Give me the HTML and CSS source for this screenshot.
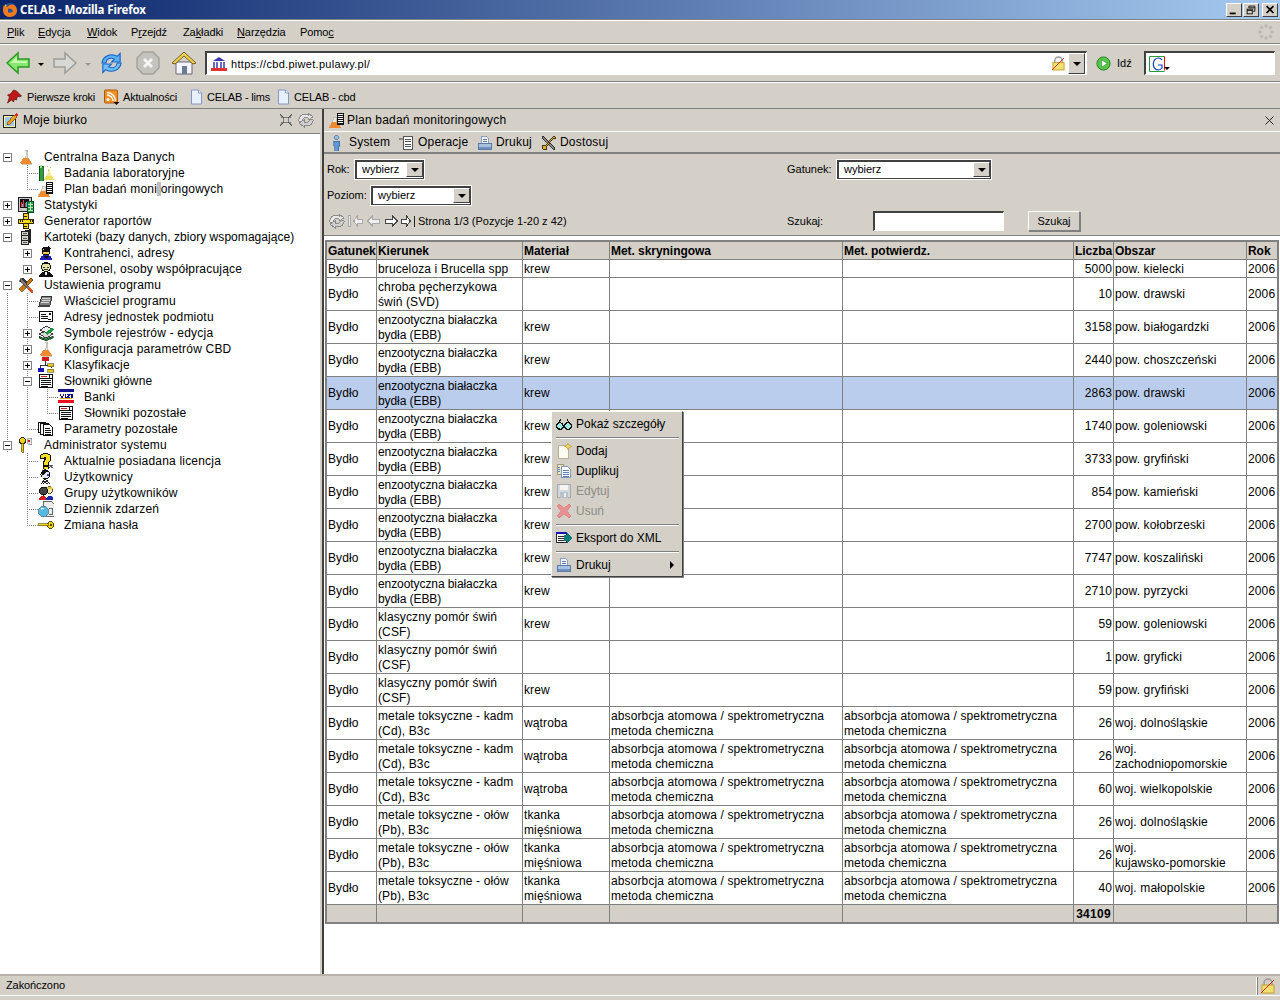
FILE: index.html
```html
<!DOCTYPE html>
<html lang="pl">
<head>
<meta charset="utf-8">
<title>CELAB - Mozilla Firefox</title>
<link rel="stylesheet" href="styles.css">
</head>
<body>
<svg class="defs" xmlns="http://www.w3.org/2000/svg">
  <symbol id="flask" viewBox="0 0 16 16"><path d="M6.5 1h3v1h-.5v5l4.500 7v1h-10v-1l4.500-7v-5h-.5z" fill="#e8e4dc" stroke="#b0a898" stroke-width=".6"/><path d="M5.500 9h5l3 4.500v1.500h-11v-1.500z" fill="#ee8a30"/></symbol>
  <symbol id="flasktube" viewBox="0 0 16 16"><rect x="1" y="1" width="4" height="15" fill="#2e9e3a" stroke="#0a3a12" stroke-width=".8"/><rect x="2" y="0" width="2" height="3" fill="#90ee90"/><path d="M10 4v3l-4 8h10l-4-8v-3z" fill="#f4ec9a"/><path d="M8 11h6l2 4h-10z" fill="#eedd55"/><g fill="#c8b850"><rect x="9" y="1" width="1" height="1"/><rect x="12" y="2" width="1" height="1"/><rect x="10" y="5" width="1" height="1"/></g></symbol>
  <symbol id="flasklist" viewBox="0 0 16 16"><path d="M4 5h3v3l4 7H0l4-7z" fill="#ece8e0" stroke="#b0a898" stroke-width=".5"/><path d="M3 10h5l4 5.500H0z" fill="#ee8a30"/><rect x="8.500" y="1.500" width="6" height="11" fill="#fff" stroke="#111"/><path d="M9 3.500h5M9 5.500h5M9 7.500h5M9 9.500h5M9 11.500h5" stroke="#111"/></symbol>
  <symbol id="stats" viewBox="0 0 16 16"><rect x="0.500" y="0.500" width="13" height="14" fill="#c8c8c8" stroke="#222"/><rect x="2" y="2" width="9" height="9" fill="#101018"/><path d="M3.500 10V5M5.500 10V3M7.500 10V6M9.500 10V4" stroke="#e04040"/><path d="M4.500 10V7M8.500 10V5" stroke="#40c0f0"/><rect x="9.500" y="4.500" width="6" height="11" fill="#1c9a4a" stroke="#0a4a20"/><path d="M10 7.500h5M10 10.500h5M10 13.500h5M12.500 5v9" stroke="#bfe8b0"/></symbol>
  <symbol id="ruler" viewBox="0 0 16 16"><rect x="5.500" y="0.500" width="5" height="15" fill="#f4d820" stroke="#332b00"/><rect x="0.500" y="6.500" width="15" height="4" fill="#f4d820" stroke="#332b00"/><path d="M2.500 7v2M4.500 7v2M12.500 7v2M14.500 7v2M6 3.500h3M6 13.500h3" stroke="#222"/></symbol>
  <symbol id="cabinet" viewBox="0 0 16 16"><path d="M5 2l8-2v14l-8 2z" fill="#222"/><rect x="3.500" y="2.500" width="7" height="13" fill="#d0d0c8" stroke="#222"/><path d="M3 6.500h8M3 11.500h8" stroke="#222"/><path d="M5 4.500h4M5 9.500h4M5 13.500h4" stroke="#555"/></symbol>
  <symbol id="agent" viewBox="0 0 16 16"><circle cx="8" cy="6" r="4" fill="#f0d040" stroke="#111"/><path d="M3 4l8-3 2 3-5 1z" fill="#111"/><rect x="4" y="5" width="8" height="2" fill="#111"/><path d="M2 15c0-4 3-5 6-5s6 1 6 5z" fill="#2020c0"/><path d="M5 11h6l-3 3z" fill="#111"/></symbol>
  <symbol id="person" viewBox="0 0 16 16"><circle cx="8" cy="6" r="4.500" fill="#e8e4a8" stroke="#111"/><path d="M3.500 5c1-5 8-5 9 0l-2-2h-5z" fill="#111"/><path d="M5 6.500h2M9 6.500h2M6 8.500h4" stroke="#333"/><path d="M1 16c0-4 3-5 7-5s7 1 7 5z" fill="#111"/><path d="M7 11h2v3h-2z" fill="#eee"/></symbol>
  <symbol id="tools" viewBox="0 0 16 16"><path d="M13 1l2 2-11 12-3-3z" fill="#c87818" stroke="#5a3000" stroke-width=".7"/><path d="M1 4l4-3 4 4-2 2z" fill="#404040" stroke="#111" stroke-width=".5"/><path d="M3 1l11 12 1 2-2 0-11-11z" fill="#7a7a7a" stroke="#222" stroke-width=".6"/><path d="M11 10l4 4-2 2-4-4z" fill="#d85020"/></symbol>
  <symbol id="owner" viewBox="0 0 16 16"><path d="M4 3h10l-2 9H1z" fill="#808080" stroke="#222" stroke-width=".8"/><path d="M4 5.500h8M3.500 7.500h8M3 9.500h8" stroke="#d8d8d8"/><path d="M1 12h11v2H0z" fill="#444"/></symbol>
  <symbol id="addr" viewBox="0 0 16 16"><rect x="1.500" y="2.500" width="13" height="10" fill="#fff" stroke="#111"/><path d="M3 5.500h5M3 7.500h7M3 9.500h7M10 10.500h3" stroke="#111"/><rect x="11" y="4" width="2" height="2" fill="#111"/></symbol>
  <symbol id="symb" viewBox="0 0 16 16"><path d="M1 9l7-3 7 3-7 4z" fill="#d8d8d8" stroke="#111" stroke-width=".8"/><path d="M2 5l6-4 7 4-6 3z" fill="#f0f0f0" stroke="#111" stroke-width=".8"/><path d="M8 7l6-4 2 2-7 5z" fill="#1a9a3a"/><path d="M1 11l7 3 7-3v2l-7 3-7-3z" fill="#1c7a30" stroke="#111" stroke-width=".5"/></symbol>
  <symbol id="hier" viewBox="0 0 16 16"><rect x="4" y="0" width="7" height="4" fill="#d01818"/><path d="M7.500 4v4M2.500 8.500h11M2.500 8v3M13.500 8v3" stroke="#333"/><rect x="0" y="11" width="6" height="4" fill="#1818b0"/><rect x="9.500" y="6.500" width="6" height="3" fill="#e8c818" stroke="#333" stroke-width=".5"/><rect x="9.500" y="12" width="6" height="3" fill="#e8c818" stroke="#333" stroke-width=".5"/></symbol>
  <symbol id="form" viewBox="0 0 16 16"><rect x="1.500" y="1.500" width="13" height="13" fill="#fff" stroke="#111"/><path d="M1 5.500h14M11.500 1v4" stroke="#111"/><path d="M3 3.500h6" stroke="#d02020"/><path d="M3 7.500h10M3 9.500h10M3 11.500h10M3 13.500h7" stroke="#111"/></symbol>
  <symbol id="visa" viewBox="0 0 16 16"><rect x="0" y="0" width="16" height="14" fill="#f4f4e8"/><rect x="0" y="0" width="16" height="3" fill="#10108a"/><rect x="0" y="11" width="16" height="3" fill="#e81020"/><path d="M2 5l2 4 2-4M7.500 5v4M9 5.500h3l-3 3h3M13 9l1-4 1 4" stroke="#10108a" fill="none"/><path d="M2 9.500h12" stroke="#e8a818"/></symbol>
  <symbol id="pages" viewBox="0 0 16 16"><rect x="0.500" y="1.500" width="7" height="10" fill="#fff" stroke="#111"/><rect x="2.500" y="2.500" width="8" height="11" fill="#fff" stroke="#111"/><path d="M5.500 3.500h6l3 3v8h-9z" fill="#fff" stroke="#111"/><path d="M7 7.500h5M7 9.500h6M7 11.500h6M7 13.500h6" stroke="#111"/></symbol>
  <symbol id="admin" viewBox="0 0 16 16"><circle cx="4.500" cy="3.500" r="3" fill="#f0d020" stroke="#332b00"/><path d="M3.500 6h2v9h-2l-1-1 1-1-1-1 1-1z" fill="#f0d020" stroke="#332b00" stroke-width=".6"/><path d="M9 2l5 -1-1 4 1 3-4-1z" fill="#e0e0e0" stroke="#666" stroke-width=".5"/><circle cx="11" cy="4" r="1.500" fill="#c02020"/></symbol>
  <symbol id="quest" viewBox="0 0 16 16"><path d="M2 5c0-6 11-6 11 0 0 4-3 3-3 7H5c0-5 3-4 3-7 0-1-2-1-2 1z" fill="#f4e020" stroke="#111"/><rect x="5" y="13" width="5" height="3" fill="#f4e020" stroke="#111"/><path d="M11 12l4 3M11 15l4-3" stroke="#555"/></symbol>
  <symbol id="user" viewBox="0 0 16 16"><circle cx="7.500" cy="5.500" r="4.500" fill="#e8e8f0" stroke="#111"/><path d="M3 5c0-5 6-6 8-3l-4 2-2 3z" fill="#111"/><rect x="9" y="5" width="2" height="2" fill="#2040d0"/><path d="M3 15l4-5 5 5M5 12l5 3M10 11l-5 4" stroke="#222" fill="none"/></symbol>
  <symbol id="group" viewBox="0 0 16 16"><circle cx="11" cy="5" r="3.500" fill="#f4e8a0" stroke="#111" stroke-width=".7"/><path d="M8 4c1-3 6-3 7 0z" fill="#e8c820"/><circle cx="5.500" cy="6" r="4" fill="#444" stroke="#111"/><path d="M1 15c0-3 2-4 4-4s4 1 4 4z" fill="#d02020"/><path d="M8 15c0-3 2-4 4-4s3 1 3 4z" fill="#1828b0"/></symbol>
  <symbol id="log" viewBox="0 0 16 16"><path d="M5 0h8l3 3v12h-8z" fill="#ececec" stroke="#444" stroke-width=".8"/><path d="M11 7.500h3v6h-3" stroke="#666" fill="none"/><circle cx="5.500" cy="10.500" r="5" fill="#58b8e0" stroke="#206080" stroke-width=".7"/><path d="M3 9a3 3 0 0 1 3-2" stroke="#d8f4ff" fill="none"/></symbol>
  <symbol id="key" viewBox="0 0 16 16"><circle cx="12.500" cy="8" r="3.200" fill="#f0d820" stroke="#554800"/><rect x="0.500" y="6.500" width="10" height="2" fill="#f0d820" stroke="#554800" stroke-width=".6"/><rect x="12" y="7" width="2" height="2" fill="#554800"/></symbol>
  <symbol id="desk" viewBox="0 0 16 16"><rect x="0.500" y="3.500" width="12" height="12" fill="#fdf4b0" stroke="#222"/><rect x="2" y="5" width="9" height="9" fill="#9ec8e8"/><path d="M4 11l7-8 3 2-7 7-3 1z" fill="#e8a020" stroke="#5a3000" stroke-width=".5"/><path d="M11 3l2-2 2 2-2 2z" fill="#d03020"/></symbol>
  <symbol id="collapse" viewBox="0 0 14 14"><g fill="#7c7c7c"><path d="M1 1l4 4h-3zM13 1l-4 4h3zM1 13l4-4h-3zM13 13l-4-4h3z"/></g><rect x="4.500" y="4.500" width="5" height="5" fill="none" stroke="#7c7c7c"/><path d="M1 1l4 4M13 1l-4 4M1 13l4-4M13 13l-4-4" stroke="#555"/></symbol>
  <symbol id="sync" viewBox="0 0 16 16"><path d="M1 9a6 6 0 0 1 9-6V1l5 4-5 3V6a4 4 0 0 0-6 3z" fill="#e8e8e8" stroke="#8a8a8a"/><path d="M15 7a6 6 0 0 1-9 6v2l-5-4 5-3v2a4 4 0 0 0 6-3z" fill="#d0d0d0" stroke="#8a8a8a"/></symbol>
  <symbol id="mperson" viewBox="0 0 12 16"><circle cx="6" cy="2.500" r="2" fill="#8ec0e8" stroke="#2a5a90" stroke-width=".6"/><path d="M3 6h6v5H8v5H4v-5H3z" fill="#5a98d8" stroke="#2a5a90" stroke-width=".6"/></symbol>
  <symbol id="mlist" viewBox="0 0 16 16"><rect x="4.500" y="1.500" width="9" height="13" fill="#fff" stroke="#555"/><path d="M6 4.500h6M6 6.500h6M6 9.500h6M6 11.500h6" stroke="#555"/><rect x="0" y="3" width="4" height="2" fill="#888"/></symbol>
  <symbol id="printer" viewBox="0 0 16 16"><path d="M4.500 1.500h5l2 2v5h-7z" fill="#f4f4f4" stroke="#8aa0c0"/><path d="M5.500 4.500h4M5.500 6.500h4" stroke="#5a78a8"/><path d="M1.500 8.500h13v5a1 1 0 0 1-1 1h-11a1 1 0 0 1-1-1z" fill="#a8c0e0" stroke="#5a78a8"/><rect x="2" y="12" width="12" height="2" fill="#7090c0"/></symbol>
  <symbol id="wrench" viewBox="0 0 16 16"><path d="M2 1l3 3 9 9-1 2-10-10-2-3z" fill="#888" stroke="#111" stroke-width=".8"/><path d="M13 1l2 2-3 1-7 8 1 2-3 1-2-2 1-3 2 1 7-8z" fill="#e8b020" stroke="#111" stroke-width=".8"/></symbol>
  <symbol id="first" viewBox="0 0 15 12"><path d="M.5.500h2v11h-2z" fill="#ececec" stroke="#a8a8a8"/><path d="M5.500 6l4-5v3h5v4h-5v3z" fill="#f0f0f0" stroke="#a8a8a8"/></symbol>
  <symbol id="prev" viewBox="0 0 15 12"><path d="M1.500 6l5-5v3h7v4h-7v3z" fill="#f0f0f0" stroke="#a8a8a8"/></symbol>
  <symbol id="next" viewBox="0 0 15 12"><path d="M13.500 6l-5-5v3h-7v4h7v3z" fill="#fff" stroke="#444"/></symbol>
  <symbol id="last" viewBox="0 0 15 12"><path d="M9.500 6l-4-5v3h-5v4h5v3z" fill="#fff" stroke="#444"/><path d="M13.500.500v11" stroke="#222" stroke-width="1.500"/></symbol>
  <symbol id="glasses" viewBox="0 0 16 16"><circle cx="4" cy="10" r="3.200" fill="#9ee8e8" stroke="#111" stroke-width="1.200"/><circle cx="12" cy="10" r="3.200" fill="#9ee8e8" stroke="#111" stroke-width="1.200"/><path d="M7 9.500h2M2 8l3-5M14 8l-3-5" stroke="#111" fill="none"/></symbol>
  <symbol id="newdoc" viewBox="0 0 16 16"><path d="M2.500 2.500h7l3 3v10h-10z" fill="#fbfbf4" stroke="#b8b090"/><path d="M12 0l1.200 2.300L15.500 3.500 13.200 4.700 12 7l-1.200-2.300L8.500 3.500l2.300-1.200z" fill="#f0d060" stroke="#b09020" stroke-width=".5"/></symbol>
  <symbol id="dup" viewBox="0 0 16 16"><path d="M1.500 1.500h6v10h-6z" fill="#f0e8c8" stroke="#a09870"/><path d="M5.500 3.500h6l3 3v8h-9z" fill="#fff" stroke="#8098b8"/><path d="M7 7.500h6M7 9.500h6M7 11.500h6M7 13.500h6" stroke="#5a80c0"/><path d="M2 4.500h2M2 6.500h2M2 8.500h2" stroke="#5a80c0"/></symbol>
  <symbol id="floppy" viewBox="0 0 16 16"><path d="M1.500 1.500h13v13h-13z" fill="#d0d8e0" stroke="#a8a8a8"/><rect x="4" y="2" width="8" height="5" fill="#f4f4f4"/><rect x="4" y="9" width="8" height="6" fill="#b8c0c8"/><rect x="8" y="10" width="2" height="4" fill="#f0f0f0"/></symbol>
  <symbol id="xred" viewBox="0 0 16 16"><path d="M3 1l5 4 5-4 2 2-4 5 4 5-2 2-5-4-5 4-2-2 4-5-4-5z" fill="#e89090" stroke="#d07878" stroke-width=".6"/></symbol>
  <symbol id="export" viewBox="0 0 18 16"><rect x="0.500" y="1.500" width="11" height="12" fill="#fff" stroke="#111"/><rect x="0" y="1" width="12" height="3" fill="#1818b0"/><path d="M2 6.500h7M2 8.500h7M2 10.500h7M2 12.500h7" stroke="#111"/><path d="M9 5h3V1l6 7-6 7v-4H9z" fill="#107a78"/></symbol>
</svg>

<div class="titlebar">
  <svg class="ff" viewBox="0 0 16 16" aria-hidden="true"><circle cx="8" cy="8" r="7" fill="#2b4f98"/><path d="M2 3c0 0 1 2 3 2 2-2 5-3 7-2 3 2 4 6 2 9-2 3-7 4-10 2C1 12 0 7 2 3z" fill="#ee7a1c"/><path d="M6 7c2-1 4 0 5 2-1 2-4 2-5 1z" fill="#2b4f98"/><path d="M3 2l2 2-2 1z" fill="#f8c030"/></svg>
  <span class="wintitle">CELAB - Mozilla Firefox</span>
  <span class="winbtns">
    <span class="winbtn"><svg viewBox="0 0 16 14"><rect x="3" y="10" width="7" height="2" fill="#000"/></svg></span>
    <span class="winbtn"><svg viewBox="0 0 16 14"><path d="M5.500 2.500h7v6h-2M5.500 4.500h7" fill="none" stroke="#000"/><path d="M5.500 2.500v2" stroke="#000"/><rect x="3.500" y="6" width="6" height="5.500" fill="#d4d0c8" stroke="#000"/><path d="M3.500 7.500h6" stroke="#000"/></svg></span>
    <span class="winbtn winclose"><svg viewBox="0 0 16 14"><path d="M4 2.500l8 8M12 2.500l-8 8" stroke="#000" stroke-width="2"/></svg></span>
  </span>
</div>

<div class="menubar">
  <span class="mi mi-plik"><u>P</u>lik</span>
  <span class="mi mi-edycja"><u>E</u>dycja</span>
  <span class="mi mi-widok"><u>W</u>idok</span>
  <span class="mi mi-przejdz">P<u>r</u>zejdź</span>
  <span class="mi mi-zakladki">Za<u>k</u>ładki</span>
  <span class="mi mi-narzedzia"><u>N</u>arzędzia</span>
  <span class="mi mi-pomoc">Pomo<u>c</u></span>
  <svg class="throbber" viewBox="0 0 16 16" aria-hidden="true"><g fill="#bdbab2"><circle cx="8" cy="2" r="1.800"/><circle cx="12.500" cy="3.500" r="1.800"/><circle cx="14" cy="8" r="1.800"/><circle cx="12.500" cy="12.500" r="1.800"/><circle cx="8" cy="14" r="1.800"/><circle cx="3.500" cy="12.500" r="1.800"/><circle cx="2" cy="8" r="1.800"/><circle cx="3.500" cy="3.500" r="1.800"/></g></svg>
</div>

<div class="navbar">
  <svg class="nb nb-back" viewBox="0 0 24 24" aria-hidden="true"><path d="M1 12L12 2v6h11v8H12v6z" fill="#86e870" stroke="#2a9a20" stroke-width="1.500"/><path d="M4 12l7-6v4h10v2z" fill="#c8f8b0"/></svg>
  <span class="drop drop-a"></span>
  <svg class="nb nb-fwd" viewBox="0 0 24 24" aria-hidden="true"><path d="M23 12L12 2v6H1v8h11v6z" fill="#d8d8d4" stroke="#9c9c98" stroke-width="1.500"/></svg>
  <span class="drop drop-b"></span>
  <svg class="nb nb-reload" viewBox="0 0 24 24" aria-hidden="true"><path d="M2 12C3 5 11 1 18 5l3-3v9h-9l3-3c-4-2-8-1-9 4z" fill="#58b0f0" stroke="#1a62c8" stroke-width="1.200"/><path d="M22 12c-1 7-9 11-16 7l-3 3v-9h9l-3 3c4 2 8 1 9-4z" fill="#70c0f8" stroke="#1a62c8" stroke-width="1.200"/></svg>
  <svg class="nb nb-stop" viewBox="0 0 24 24" aria-hidden="true"><path d="M7 1h10l6 6v10l-6 6H7l-6-6V7z" fill="#c4c2bc" stroke="#a4a29c" stroke-width="1.500"/><path d="M8 8l8 8M16 8l-8 8" stroke="#f4f4f4" stroke-width="3"/></svg>
  <svg class="nb nb-home" viewBox="0 0 24 24" aria-hidden="true"><path d="M4 11h16v12H4z" fill="#f4f4f8" stroke="#667" stroke-width="1"/><path d="M0 12L12 1l12 11-3 1L12 5l-9 8z" fill="#f0d050" stroke="#776020" stroke-width="1"/><rect x="10" y="15" width="5" height="8" fill="#6a7a98"/></svg>
  <div class="urlbar">
    <svg class="url-ico" viewBox="0 0 16 16" aria-hidden="true"><path d="M2 5l6-4 6 4z" fill="#3838a8"/><path d="M3 6v6M6 6v6M10 6v6M13 6v6" stroke="#3838a8" stroke-width="1.500"/><rect x="0" y="12" width="16" height="3" fill="#e03030"/></svg>
    <span class="url-text">https://cbd.piwet.pulawy.pl/</span>
    <svg class="lock" viewBox="0 0 14 16" aria-hidden="true"><path d="M3 8V5a4 4 0 0 1 8 0v3" fill="none" stroke="#999" stroke-width="1.500"/><rect x="1" y="7" width="12" height="8" fill="#f4e070" stroke="#c0a030"/><path d="M0 15L13 2" stroke="#e02020"/></svg>
    <span class="combo-arrow"><i></i></span>
  </div>
  <svg class="go" viewBox="0 0 16 16" aria-hidden="true"><circle cx="8" cy="8" r="7" fill="#58c848" stroke="#1a7a20"/><path d="M6 4l6 4-6 4z" fill="#fff" stroke="#1a7a20" stroke-width=".6"/></svg>
  <span class="go-text">Idź</span>
  <div class="searchbox">
    <svg class="g-ico" viewBox="0 0 16 16" aria-hidden="true"><path d="M.5.500h15" stroke="#2a9a3a"/><path d="M.500 .500v15h15" stroke="#2a9a3a" fill="none"/><path d="M15.500 .500v14" stroke="#e01010"/><path d="M13 4a5 6 0 1 0 0 8V9h-4" fill="none" stroke="#1040c0" stroke-width="1.200"/></svg>
    <i class="g-arrow"></i>
  </div>
</div>

<div class="bookmarks">
  <span class="bm bm-1"><svg viewBox="0 0 16 16" aria-hidden="true"><path d="M1 14l2-6-2-2 3-1 3-4 3 1 2 2 3 3-2 1-2-1-1 4-2-1-1 3-2-2z" fill="#c01818" stroke="#400" stroke-width=".6"/></svg>Pierwsze kroki</span>
  <span class="bm bm-2"><svg viewBox="0 0 16 16" aria-hidden="true"><rect x="1" y="1" width="13" height="13" rx="1" fill="#f09028" stroke="#b05a08"/><circle cx="4.500" cy="10.500" r="1.500" fill="#fff"/><path d="M3.500 6a6 6 0 0 1 6 6M3.500 3.500a8.500 8.500 0 0 1 8.500 8.500" fill="none" stroke="#fff" stroke-width="1.400"/><path d="M10 13h6l-3 3z" fill="#111"/></svg>Aktualności</span>
  <span class="bm bm-3"><svg viewBox="0 0 16 16" aria-hidden="true"><path d="M3 1h7l3 3v11H3z" fill="#e8f0fc" stroke="#8098c8"/><path d="M10 1v3h3" fill="#fff" stroke="#8098c8"/></svg>CELAB - lims</span>
  <span class="bm bm-4"><svg viewBox="0 0 16 16" aria-hidden="true"><path d="M3 1h7l3 3v11H3z" fill="#e8f0fc" stroke="#8098c8"/><path d="M10 1v3h3" fill="#fff" stroke="#8098c8"/></svg>CELAB - cbd</span>
</div>

<div class="main">
  <aside class="leftpanel">
    <div class="lp-head">
      <svg class="ic" aria-hidden="true"><use href="#desk"/></svg>
      <span class="lp-title">Moje biurko</span>
      <svg class="ic14" aria-hidden="true"><use href="#collapse"/></svg>
      <svg class="ic ic-sync" aria-hidden="true"><use href="#sync"/></svg>
    </div>
    <div class="tree">
      <div class="row"><span class="ind"><b class="box minus"></b></span><svg class="ic"><use href="#flask"/></svg><span>Centralna Baza Danych</span></div>
      <div class="row"><span class="ind e"></span><span class="ind t"></span><svg class="ic"><use href="#flasktube"/></svg><span>Badania laboratoryjne</span></div>
      <div class="row"><span class="ind e"></span><span class="ind l"></span><svg class="ic"><use href="#flasklist"/></svg><span>Plan badań moni<span class="cur">t</span>oringowych</span></div>
      <div class="row"><span class="ind"><b class="box plus"></b></span><svg class="ic"><use href="#stats"/></svg><span>Statystyki</span></div>
      <div class="row"><span class="ind"><b class="box plus"></b></span><svg class="ic"><use href="#ruler"/></svg><span>Generator raportów</span></div>
      <div class="row tight"><span class="ind"><b class="box minus"></b></span><svg class="ic"><use href="#cabinet"/></svg><span>Kartoteki (bazy danych, zbiory wspomagające)</span></div>
      <div class="row"><span class="ind e"></span><span class="ind"><b class="box plus"></b></span><svg class="ic"><use href="#agent"/></svg><span>Kontrahenci, adresy</span></div>
      <div class="row"><span class="ind e"></span><span class="ind"><b class="box plus"></b></span><svg class="ic"><use href="#person"/></svg><span>Personel, osoby współpracujące</span></div>
      <div class="row"><span class="ind"><b class="box minus"></b></span><svg class="ic"><use href="#tools"/></svg><span>Ustawienia programu</span></div>
      <div class="row"><span class="ind v"></span><span class="ind t"></span><svg class="ic"><use href="#owner"/></svg><span>Właściciel programu</span></div>
      <div class="row"><span class="ind v"></span><span class="ind t"></span><svg class="ic"><use href="#addr"/></svg><span>Adresy jednostek podmiotu</span></div>
      <div class="row"><span class="ind v"></span><span class="ind v"><b class="box plus"></b></span><svg class="ic"><use href="#symb"/></svg><span>Symbole rejestrów - edycja</span></div>
      <div class="row"><span class="ind v"></span><span class="ind v"><b class="box plus"></b></span><svg class="ic"><use href="#flask"/></svg><span>Konfiguracja parametrów CBD</span></div>
      <div class="row"><span class="ind v"></span><span class="ind v"><b class="box plus"></b></span><svg class="ic"><use href="#hier"/></svg><span>Klasyfikacje</span></div>
      <div class="row"><span class="ind v"></span><span class="ind v"><b class="box minus"></b></span><svg class="ic"><use href="#form"/></svg><span>Słowniki główne</span></div>
      <div class="row"><span class="ind v"></span><span class="ind v"></span><span class="ind t"></span><svg class="ic"><use href="#visa"/></svg><span>Banki</span></div>
      <div class="row"><span class="ind v"></span><span class="ind v"></span><span class="ind l"></span><svg class="ic"><use href="#form"/></svg><span>Słowniki pozostałe</span></div>
      <div class="row"><span class="ind v"></span><span class="ind l"></span><svg class="ic"><use href="#pages"/></svg><span>Parametry pozostałe</span></div>
      <div class="row"><span class="ind v"><b class="box minus"></b></span><svg class="ic"><use href="#admin"/></svg><span>Administrator systemu</span></div>
      <div class="row"><span class="ind e"></span><span class="ind t"></span><svg class="ic"><use href="#quest"/></svg><span>Aktualnie posiadana licencja</span></div>
      <div class="row"><span class="ind e"></span><span class="ind t"></span><svg class="ic"><use href="#user"/></svg><span>Użytkownicy</span></div>
      <div class="row"><span class="ind e"></span><span class="ind t"></span><svg class="ic"><use href="#group"/></svg><span>Grupy użytkowników</span></div>
      <div class="row"><span class="ind e"></span><span class="ind t"></span><svg class="ic"><use href="#log"/></svg><span>Dziennik zdarzeń</span></div>
      <div class="row"><span class="ind e"></span><span class="ind l"></span><svg class="ic"><use href="#key"/></svg><span>Zmiana hasła</span></div>
    </div>
  </aside>
  <div class="divider"></div>
  <section class="rightpanel">
    <div class="rp-head">
      <svg class="ic" aria-hidden="true"><use href="#flasklist"/></svg>
      <span class="rp-title">Plan badań monitoringowych</span>
      <svg class="closex" viewBox="0 0 9 9" aria-hidden="true"><path d="M.5.500l8 8M8.500.500l-8 8" stroke="#222" fill="none"/></svg>
    </div>
    <div class="rp-menu">
      <span class="rm rm-1"><svg class="ic" aria-hidden="true"><use href="#mperson"/></svg>System</span>
      <span class="rm rm-2"><svg class="ic" aria-hidden="true"><use href="#mlist"/></svg>Operacje</span>
      <span class="rm rm-3"><svg class="ic" aria-hidden="true"><use href="#printer"/></svg>Drukuj</span>
      <span class="rm rm-4"><svg class="ic" aria-hidden="true"><use href="#wrench"/></svg>Dostosuj</span>
    </div>
    <div class="filters">
      <div class="f-cell"><span class="f-rok">Rok:</span><span class="sel sel-rok"><span class="sel-val">wybierz</span><span class="combo-arrow"><i></i></span></span></div>
      <div class="f-cell"><span class="f-gat">Gatunek:</span><span class="sel sel-gat"><span class="sel-val">wybierz</span><span class="combo-arrow"><i></i></span></span></div>
      <div class="f-cell"><span class="f-poz">Poziom:</span><span class="sel sel-poz"><span class="sel-val">wybierz</span><span class="combo-arrow"><i></i></span></span></div>
      <div class="f-cell"></div>
      <div class="f-cell pager">
        <svg class="ic" aria-hidden="true"><use href="#sync"/></svg>
        <svg class="pg pg-first" aria-hidden="true"><use href="#first"/></svg>
        <svg class="pg pg-prev" aria-hidden="true"><use href="#prev"/></svg>
        <svg class="pg pg-next" aria-hidden="true"><use href="#next"/></svg>
        <svg class="pg pg-last" aria-hidden="true"><use href="#last"/></svg>
        <span class="pg-text">Strona 1/3 (Pozycje 1-20 z 42)</span>
      </div>
      <div class="f-cell"><span class="f-szu">Szukaj:</span><span class="inp"></span><span class="btn">Szukaj</span></div>
    </div>
    <div class="tablewrap">
      <table class="grid">
        <colgroup><col class="c1"><col class="c2"><col class="c3"><col class="c4"><col class="c5"><col class="c6"><col class="c7"><col class="c8"></colgroup>
        <thead><tr><th>Gatunek</th><th>Kierunek</th><th>Materiał</th><th>Met. skryningowa</th><th>Met. potwierdz.</th><th>Liczba</th><th>Obszar</th><th>Rok</th></tr></thead>
        <tbody>
          <tr class="r1"><td>Bydło</td><td>bruceloza i Brucella spp</td><td>krew</td><td></td><td></td><td class="n">5000</td><td>pow. kielecki</td><td>2006</td></tr>
          <tr><td>Bydło</td><td>chroba pęcherzykowa<br>świń (SVD)</td><td></td><td></td><td></td><td class="n">10</td><td>pow. drawski</td><td>2006</td></tr>
          <tr><td>Bydło</td><td class="ez">enzootyczna białaczka<br>bydła (EBB)</td><td>krew</td><td></td><td></td><td class="n">3158</td><td>pow. białogardzki</td><td>2006</td></tr>
          <tr><td>Bydło</td><td class="ez">enzootyczna białaczka<br>bydła (EBB)</td><td>krew</td><td></td><td></td><td class="n">2440</td><td>pow. choszczeński</td><td>2006</td></tr>
          <tr class="sel-row"><td>Bydło</td><td class="ez">enzootyczna białaczka<br>bydła (EBB)</td><td>krew</td><td></td><td></td><td class="n">2863</td><td>pow. drawski</td><td>2006</td></tr>
          <tr><td>Bydło</td><td class="ez">enzootyczna białaczka<br>bydła (EBB)</td><td>krew</td><td></td><td></td><td class="n">1740</td><td>pow. goleniowski</td><td>2006</td></tr>
          <tr><td>Bydło</td><td class="ez">enzootyczna białaczka<br>bydła (EBB)</td><td>krew</td><td></td><td></td><td class="n">3733</td><td>pow. gryfiński</td><td>2006</td></tr>
          <tr><td>Bydło</td><td class="ez">enzootyczna białaczka<br>bydła (EBB)</td><td>krew</td><td></td><td></td><td class="n">854</td><td>pow. kamieński</td><td>2006</td></tr>
          <tr><td>Bydło</td><td class="ez">enzootyczna białaczka<br>bydła (EBB)</td><td>krew</td><td></td><td></td><td class="n">2700</td><td>pow. kołobrzeski</td><td>2006</td></tr>
          <tr><td>Bydło</td><td class="ez">enzootyczna białaczka<br>bydła (EBB)</td><td>krew</td><td></td><td></td><td class="n">7747</td><td>pow. koszaliński</td><td>2006</td></tr>
          <tr><td>Bydło</td><td class="ez">enzootyczna białaczka<br>bydła (EBB)</td><td>krew</td><td></td><td></td><td class="n">2710</td><td>pow. pyrzycki</td><td>2006</td></tr>
          <tr><td>Bydło</td><td>klasyczny pomór świń<br>(CSF)</td><td>krew</td><td></td><td></td><td class="n">59</td><td>pow. goleniowski</td><td>2006</td></tr>
          <tr><td>Bydło</td><td>klasyczny pomór świń<br>(CSF)</td><td></td><td></td><td></td><td class="n">1</td><td>pow. gryficki</td><td>2006</td></tr>
          <tr><td>Bydło</td><td>klasyczny pomór świń<br>(CSF)</td><td>krew</td><td></td><td></td><td class="n">59</td><td>pow. gryfiński</td><td>2006</td></tr>
          <tr><td>Bydło</td><td>metale toksyczne - kadm<br>(Cd), B3c</td><td>wątroba</td><td>absorbcja atomowa / spektrometryczna<br>metoda chemiczna</td><td>absorbcja atomowa / spektrometryczna<br>metoda chemiczna</td><td class="n">26</td><td>woj. dolnośląskie</td><td>2006</td></tr>
          <tr><td>Bydło</td><td>metale toksyczne - kadm<br>(Cd), B3c</td><td>wątroba</td><td>absorbcja atomowa / spektrometryczna<br>metoda chemiczna</td><td>absorbcja atomowa / spektrometryczna<br>metoda chemiczna</td><td class="n">26</td><td>woj.<br>zachodniopomorskie</td><td>2006</td></tr>
          <tr><td>Bydło</td><td>metale toksyczne - kadm<br>(Cd), B3c</td><td>wątroba</td><td>absorbcja atomowa / spektrometryczna<br>metoda chemiczna</td><td>absorbcja atomowa / spektrometryczna<br>metoda chemiczna</td><td class="n">60</td><td>woj. wielkopolskie</td><td>2006</td></tr>
          <tr><td>Bydło</td><td>metale toksyczne - ołów<br>(Pb), B3c</td><td>tkanka<br>mięśniowa</td><td>absorbcja atomowa / spektrometryczna<br>metoda chemiczna</td><td>absorbcja atomowa / spektrometryczna<br>metoda chemiczna</td><td class="n">26</td><td>woj. dolnośląskie</td><td>2006</td></tr>
          <tr><td>Bydło</td><td>metale toksyczne - ołów<br>(Pb), B3c</td><td>tkanka<br>mięśniowa</td><td>absorbcja atomowa / spektrometryczna<br>metoda chemiczna</td><td>absorbcja atomowa / spektrometryczna<br>metoda chemiczna</td><td class="n">26</td><td>woj.<br>kujawsko-pomorskie</td><td>2006</td></tr>
          <tr><td>Bydło</td><td>metale toksyczne - ołów<br>(Pb), B3c</td><td>tkanka<br>mięśniowa</td><td>absorbcja atomowa / spektrometryczna<br>metoda chemiczna</td><td>absorbcja atomowa / spektrometryczna<br>metoda chemiczna</td><td class="n">40</td><td>woj. małopolskie</td><td>2006</td></tr>
        </tbody>
        <tfoot><tr><td></td><td></td><td></td><td></td><td></td><td class="n total">34109</td><td></td><td></td></tr></tfoot>
      </table>
    </div>
  </section>
</div>

<div class="statusbar">
  <span class="st-text">Zakończono</span>
  <span class="st-cell"><svg viewBox="0 0 14 16" aria-hidden="true"><path d="M3 8V5a4 4 0 0 1 8 0v3" fill="none" stroke="#999" stroke-width="1.500"/><rect x="1" y="7" width="12" height="8" fill="#f4e070" stroke="#c0a030"/><path d="M0 15L13 2" stroke="#e02020"/></svg></span>
</div>

<div class="ctx">
  <div class="ci ci-top"><svg class="ic" aria-hidden="true"><use href="#glasses"/></svg>Pokaż szczegóły</div>
  <div class="csep"></div>
  <div class="ci"><svg class="ic" aria-hidden="true"><use href="#newdoc"/></svg>Dodaj</div>
  <div class="ci"><svg class="ic" aria-hidden="true"><use href="#dup"/></svg>Duplikuj</div>
  <div class="ci off"><svg class="ic" aria-hidden="true"><use href="#floppy"/></svg>Edytuj</div>
  <div class="ci off"><svg class="ic" aria-hidden="true"><use href="#xred"/></svg>Usuń</div>
  <div class="csep"></div>
  <div class="ci"><svg class="ic" aria-hidden="true"><use href="#export"/></svg>Eksport do XML</div>
  <div class="csep"></div>
  <div class="ci"><svg class="ic" aria-hidden="true"><use href="#printer"/></svg>Drukuj<i class="sub"></i></div>
</div>
</body>
</html>
```
FILE: styles.css
```css
* { box-sizing: border-box; }
html, body { margin: 0; padding: 0; }
body {
  position: relative;
  width: 1280px;
  height: 1000px;
  overflow: hidden;
  display: flex;
  flex-direction: column;
  background: #d4d0c8;
  color: #000;
  font: 12px/15px "Liberation Sans", Arial, sans-serif;
  letter-spacing: .2px;
}
.defs { display: none; }
svg { display: block; flex: none; }

/* title bar */
.titlebar {
  height: 19px;
  display: flex;
  align-items: center;
  background: linear-gradient(to right, #0a246a, #a6caf0);
  color: #fff;
  padding-left: 2px;
}
.ff { width: 16px; height: 16px; }
.wintitle { margin-left: 2px; font: bold 11.500px/19px "Noto Sans", sans-serif; letter-spacing: -.13px; }
.winbtns { margin-left: auto; margin-right: 2px; display: flex; gap: 1px; }
.winbtn {
  width: 16px; height: 14px;
  background: #d4d0c8;
  border: 1px solid;
  border-color: #fff #404040 #404040 #fff;
}
.winbtn svg { width: 14px; height: 12px; }
.winclose { margin-left: 2px; }

/* firefox chrome */
.menubar {
  height: 25px;
  border-top: 1px solid #808080;
  box-shadow: inset 0 1px 0 #fff;
  border-bottom: 1px solid #808080;
  display: flex;
  align-items: center;
  font: 11px/14px "Liberation Sans", Arial, sans-serif;
  letter-spacing: -.1px;
  padding: 1px 0 0 7px;
}
.mi-plik { width: 31px; }
.mi-edycja { width: 49px; }
.mi-widok { width: 44px; }
.mi-przejdz { width: 52px; }
.mi-zakladki { width: 54px; }
.mi-narzedzia { width: 63px; }
.throbber { width: 16px; height: 16px; margin-left: auto; margin-right: 6px; }

.navbar {
  height: 38px;
  border-top: 1px solid #fff;
  border-bottom: 1px solid #808080;
  display: flex;
  align-items: center;
  font: 11px/14px "Liberation Sans", Arial, sans-serif;
  letter-spacing: 0;
  padding-left: 6px;
}
.nb { width: 24px; height: 24px; }
.drop { width: 0; height: 0; border: 3px solid transparent; border-top: 3px solid #000; border-bottom: 0; margin: 2px 0 0 8px; }
.drop-b { border-top-color: #999; }
.nb-fwd { margin-left: 9px; }
.nb-reload { margin-left: 9px; width: 23px; }
.nb-stop { margin-left: 13px; }
.nb-home { margin-left: 12px; }
.urlbar {
  width: 882px;
  height: 24px;
  margin-left: 9px;
  background: #fff;
  border: 1px solid;
  border-top: 2px solid #404040;
  border-left: 2px solid #404040;
  border-color: #404040 #fff #fff #404040;
  display: flex;
  align-items: center;
  padding-left: 4px;
  padding-right: 1px;
}
.url-ico { width: 16px; height: 16px; }
.url-text { margin: 1px 0 0 4px; letter-spacing: .3px; }
.lock { width: 13px; height: 15px; margin-left: auto; }
.combo-arrow {
  width: 17px; height: 100%;
  margin-left: 3px;
  display: flex; align-items: center; justify-content: center;
  background: #d4d0c8;
  border: 1px solid;
  border-color: #fff #404040 #404040 #fff;
  flex: none;
}
.combo-arrow i { width: 0; height: 0; border: 4px solid transparent; border-top: 4px solid #000; border-bottom: 0; }
.go { width: 15px; height: 15px; margin-left: 9px; }
.go-text { margin-left: 6px; }
.searchbox {
  width: 131px; height: 24px;
  margin-left: 12px;
  background: #fff;
  border: 1px solid;
  border-top: 2px solid #404040;
  border-left: 2px solid #404040;
  border-color: #404040 #fff #fff #404040;
  display: flex;
  align-items: center;
  padding-left: 3px;
}
.g-ico { width: 16px; height: 16px; }
.g-arrow { width: 0; height: 0; border: 3px solid transparent; border-top: 3px solid #000; border-bottom: 0; margin: 10px 0 0 -1px; }

.bookmarks {
  height: 26px;
  border-top: 1px solid #fff;
  display: flex;
  align-items: center;
  font: 11px/14px "Liberation Sans", Arial, sans-serif;
  letter-spacing: -.2px;
  padding: 2px 0 0 6px;
}
.bm { display: flex; align-items: center; }
.bm svg { width: 17px; height: 16px; margin-right: 4px; }
.bm-1 { width: 97px; }
.bm-2 { width: 85px; }
.bm-2 svg { margin-right: 3px; }
.bm-3 { width: 87px; }
.bm-3 svg, .bm-4 svg { margin-right: 2px; }

/* work area */
.main {
  height: 866px;
  border-top: 1px solid #808080;
  display: flex;
}
.leftpanel { width: 320px; background: #fff; display: flex; flex-direction: column; }
.lp-head {
  height: 25px;
  flex: none;
  background: #d4d0c8;
  border-bottom: 1px solid #808080;
  display: flex;
  align-items: center;
  padding: 0 1px 2px 3px;
}
.ic { width: 16px; height: 16px; }
.tree .ic, .ctx .ic, .rm .ic, .pg, .rp-head .ic, .lp-head svg, .pager .ic { shape-rendering: crispEdges; }
.ic14 { width: 14px; height: 14px; margin-right: 5px; }
.lp-title { margin-left: 4px; margin-right: auto; }
.ic-sync { margin-right: 5px; }

.tree { padding-top: 15px; }
.row { height: 16px; display: flex; align-items: center; white-space: nowrap; }
.row.tight { letter-spacing: .05px; }
.row .ic { margin-right: 10px; }
.ind {
  width: 20px; height: 16px; flex: none;
  --x: 9px;
  display: flex; align-items: center;
  background-repeat: no-repeat;
}
.ind:first-child { width: 18px; --x: 7px; }
.ind.v {
  background-image: repeating-linear-gradient(to bottom, #808080 0 1px, transparent 1px 2px);
  background-size: 1px 16px;
  background-position: var(--x) 0;
}
.ind.t {
  background-image: repeating-linear-gradient(to bottom, #808080 0 1px, transparent 1px 2px), repeating-linear-gradient(to right, #808080 0 1px, transparent 1px 2px);
  background-size: 1px 16px, 11px 1px;
  background-position: var(--x) 0, var(--x) 8px;
}
.ind.l {
  background-image: repeating-linear-gradient(to bottom, #808080 0 1px, transparent 1px 2px), repeating-linear-gradient(to right, #808080 0 1px, transparent 1px 2px);
  background-size: 1px 9px, 11px 1px;
  background-position: var(--x) 0, var(--x) 8px;
}
.box {
  width: 9px; height: 9px;
  margin-left: calc(var(--x) - 4px);
  background-color: #fff;
  border: 1px solid #808080;
  background-repeat: no-repeat;
  background-image: linear-gradient(#000, #000), linear-gradient(#000, #000);
  background-position: center, center;
}
.box.plus { background-size: 5px 1px, 1px 5px; }
.box.minus { background-size: 5px 1px, 0 0; }
.cur { background: #bdbdbd; color: #bdbdbd; }

.divider { width: 4px; background: #d4d0c8; border-right: 2px solid #404040; }

.rightpanel { width: 956px; background: #fff; display: flex; flex-direction: column; }
.rp-head {
  height: 23px;
  flex: none;
  background: #d4d0c8;
  border-bottom: 1px solid #fff;
  display: flex;
  align-items: center;
  padding-left: 5px;
}
.rp-title { margin-left: 2px; margin-right: auto; }
.closex { width: 9px; height: 9px; margin-right: 6px; }
.rp-menu {
  height: 22px;
  flex: none;
  background: #d4d0c8;
  border-bottom: 2px solid #808080;
  display: flex;
  align-items: center;
  padding: 1px 0 0 6px;
}
.rm { display: flex; align-items: center; }
.rm .ic { margin-right: 3px; }
.rm-1 { width: 69px; }
.rm-1 .ic { width: 13px; margin-right: 6px; }
.rm-2 { width: 78px; }
.rm-2 .ic { margin-right: 3px; }
.rm-3 { width: 64px; }

.filters {
  height: 82px;
  flex: none;
  background: #d4d0c8;
  border-bottom: 1px solid #808080;
  padding-top: 2px;
  display: grid;
  grid-template-columns: 460px 1fr;
  grid-template-rows: repeat(3, 26px);
  font-size: 11px;
  letter-spacing: 0;
}
.f-cell { display: flex; align-items: center; padding-left: 3px; white-space: nowrap; }
.f-rok { width: 28px; }
.f-poz { width: 44px; }
.f-gat { width: 50px; }
.f-szu { width: 86px; }
.sel {
  height: 19px;
  background: #fff;
  display: flex;
  align-items: center;
  border: 1px solid #404040;
  border-top-width: 2px;
  border-left-width: 2px;
  box-shadow: 0 0 0 1px #fff;
  font-size: 11px;
}
.sel .combo-arrow { margin-left: auto; height: 15px; border-width: 1px; }
.sel-val { margin-left: 5px; }
.sel-rok { width: 69px; }
.sel-poz { width: 100px; }
.sel-gat { width: 154px; }
.pager { padding-left: 5px; }
.pager .ic { width: 16px; }
.pg { width: 15px; height: 12px; }
.pg-first { margin-left: 3px; }
.pg-prev { margin-left: 3px; }
.pg-next { margin-left: 3px; }
.pg-last { margin-left: 2px; }
.pg-text { margin-left: 2px; }
.inp {
  width: 131px; height: 20px;
  background: #fff;
  border: 1px solid;
  border-color: #404040 #fff #fff #404040;
  border-top-width: 2px; border-left-width: 2px;
}
.btn {
  width: 52px; height: 20px;
  margin-left: 24px;
  display: flex; align-items: center; justify-content: center;
  background: #d4d0c8;
  border: 1px solid;
  border-color: #fff #808080 #808080 #fff;
  box-shadow: 1px 1px 0 #808080;
}

.tablewrap { padding: 4px 0 0 1px; }
.grid {
  table-layout: fixed;
  width: 954px;
  border-collapse: separate;
  border-spacing: 0;
  border: 2px solid #808080;
  background: #fff;
  letter-spacing: .12px;
}
.c1 { width: 50px; } .c2 { width: 146px; } .c3 { width: 87px; } .c4 { width: 233px; }
.c5 { width: 231px; } .c6 { width: 40px; } .c7 { width: 133px; } .c8 { width: 30px; }
.grid th, .grid td {
  border-right: 1px solid #808080;
  border-bottom: 1px solid #808080;
  padding: 1px 1px 0;
  vertical-align: middle;
  text-align: left;
  white-space: nowrap;
  overflow: hidden;
  height: 33px;
}
.grid th:last-child, .grid td:last-child { border-right: 0; }
.grid th { height: 18px; background: #d4d0c8; font-weight: bold; letter-spacing: -.05px; }
.grid .r1 td { height: 18px; }
.grid td.n { text-align: right; }
.grid td.ez { letter-spacing: -.08px; }
.grid .sel-row td { background: #bbcdec; }
.grid tfoot td { height: 17px; background: #d4d0c8; border-bottom: 0; }
.grid td.total { font-weight: bold; letter-spacing: .3px; padding-right: 2px; }

/* status bar */
.statusbar {
  height: 25px;
  border-top: 2px solid #b8b4ac;
  display: flex;
  align-items: flex-start;
  padding: 1px 3px 0 6px;
  font-size: 11px;
  letter-spacing: -.1px;
  background: linear-gradient(to bottom, #d4d0c8 0 19px, #fff 19px 20px, #d4d0c8 20px);
}
.st-text { line-height: 16px; margin-right: auto; }
.st-cell { width: 20px; height: 18px; border-left: 1px solid #808080; box-shadow: -1px 0 0 #fff; padding: 1px 0 0 3px; }
.st-cell svg { width: 14px; height: 16px; }

/* context menu */
.ctx {
  position: absolute;
  left: 551px;
  top: 411px;
  width: 132px;
  height: 166px;
  background: #d4d0c8;
  border: 1px solid;
  border-color: #fff #404040 #404040 #fff;
  box-shadow: 1px 1px 0 #808080;
  padding-top: 2px;
  letter-spacing: 0;
}
.ci { height: 20px; display: flex; align-items: center; padding-left: 4px; }
.ci .ic { margin-right: 4px; }
.off { color: #8e8c86; }
.csep { height: 2px; margin: 3px 3px 2px 4px; background: #808080; border-bottom: 1px solid #fff; }
.sub { width: 0; height: 0; margin-left: auto; margin-right: 8px; border: 4px solid transparent; border-left: 4px solid #000; border-right: 0; }
```
